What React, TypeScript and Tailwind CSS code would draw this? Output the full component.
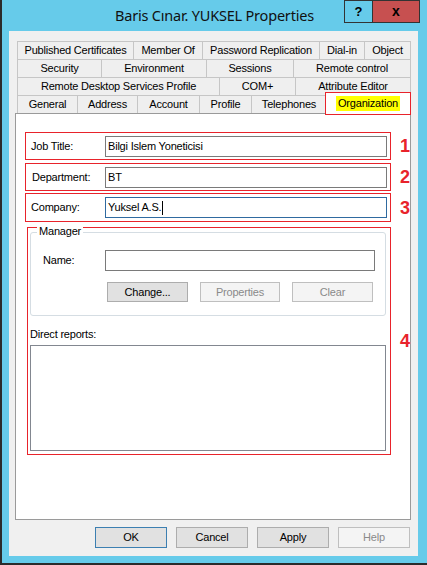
import React from "react";

function Tab({ label, w, last }: { label: string; w: string; last?: boolean }) {
  return (
    <div
      className={`${w} h-[18px] shrink-0 border-t border-l ${last ? "border-r" : ""} border-[#c6c6c6] bg-[#efefef] flex items-center justify-center text-[11px] tracking-[-0.2px] text-black whitespace-nowrap`}
    >
      {label}
    </div>
  );
}

function Num({ n }: { n: string }) {
  return (
    <div className="ml-[9px] text-[18px] leading-none font-bold text-[#e8232b] font-['Liberation_Sans',Arial,sans-serif]">
      {n}
    </div>
  );
}

export default function App() {
  return (
    <div className="w-[427px] h-[565px] bg-[#66cbea] border-l-2 border-b-2 border-[#2b2b2b] relative font-['Liberation_Sans',Arial,sans-serif] text-black overflow-hidden">
      {/* Title bar */}
      <div className="h-[31px] flex items-center justify-center relative">
        <div className="text-[14.5px] font-['Noto_Sans',sans-serif] tracking-[-0.2px] text-[#111] pt-[1px]">
          Baris Cınar. YUKSEL Properties
        </div>
        <div className="absolute top-0 right-[7px] flex">
          <div className="w-[29px] h-[23px] border border-[#333] flex items-center justify-center text-[13px] font-bold">
            ?
          </div>
          <div className="w-[47px] h-[23px] border border-l-0 border-[#333] bg-[#c75050] flex items-center justify-center text-[14px] font-bold">
            x
          </div>
        </div>
      </div>

      {/* Client area */}
      <div className="ml-[7px] w-[409px] h-[525px] bg-[#f0f0f0] pt-[10px] flex flex-col">
        {/* Tabs */}
        <div className="ml-[8px] w-[394px] flex flex-col">
          <div className="flex">
            <Tab label="Published Certificates" w="w-[116px]" />
            <Tab label="Member Of" w="w-[69px]" />
            <Tab label="Password Replication" w="w-[117px]" />
            <Tab label="Dial-in" w="w-[45px]" />
            <Tab label="Object" w="w-[47px]" last />
          </div>
          <div className="flex">
            <Tab label="Security" w="w-[84px]" />
            <Tab label="Environment" w="w-[105px]" />
            <Tab label="Sessions" w="w-[87px]" />
            <Tab label="Remote control" w="w-[118px]" last />
          </div>
          <div className="flex">
            <Tab label="Remote Desktop Services Profile" w="w-[202px]" />
            <Tab label="COM+" w="w-[76px]" />
            <Tab label="Attribute Editor" w="w-[116px]" last />
          </div>
          <div className="flex h-[18px] items-start">
            <Tab label="General" w="w-[60px]" />
            <Tab label="Address" w="w-[60px]" />
            <Tab label="Account" w="w-[62px]" />
            <Tab label="Profile" w="w-[52px]" />
            <Tab label="Telephones" w="w-[75px]" />
            <div className="relative z-10 -mt-[3px] w-[86px] h-[23px] -ml-[1px] border border-[#e8232b] bg-white flex items-center justify-center">
              <span className="bg-[#ffff00] px-[2px] py-[1px] text-[11px] tracking-[-0.2px] leading-[13px]">
                Organization
              </span>
            </div>
          </div>
        </div>

        {/* Panel */}
        <div className="ml-[6px] w-[396px] h-[407px] border border-[#9a9a9a] bg-white pt-[18px] pl-[9px] flex flex-col">
          <div className="flex items-center">
            <div className="w-[366px] h-[28px] border border-[#e8232b] flex items-center">
              <div className="w-[79px] pl-[5px] text-[11px] tracking-[-0.2px]">Job Title:</div>
              <div className="w-[282px] h-[21px] border border-[#7a7a7a] flex items-center pl-[2px] text-[11px] tracking-[-0.2px]">
                Bilgi Islem Yoneticisi
              </div>
            </div>
            <Num n="1" />
          </div>
          <div className="flex items-center mt-[3px]">
            <div className="w-[366px] h-[28px] border border-[#e8232b] flex items-center">
              <div className="w-[79px] pl-[6px] text-[11px] tracking-[-0.2px]">Department:</div>
              <div className="w-[282px] h-[21px] border border-[#7a7a7a] flex items-center pl-[2px] text-[11px] tracking-[-0.2px]">
                BT
              </div>
            </div>
            <Num n="2" />
          </div>
          <div className="flex items-center mt-[2px]">
            <div className="w-[366px] h-[29px] border border-[#e8232b] flex items-center">
              <div className="w-[79px] pl-[5px] text-[11px] tracking-[-0.2px]">Company:</div>
              <div className="w-[282px] h-[21px] border border-[#2f6aa0] flex items-center pl-[2px] text-[11px] tracking-[-0.2px]">
                Yuksel A.S.
                <span className="inline-block w-px h-[14px] bg-black ml-[1px]" />
              </div>
            </div>
            <Num n="3" />
          </div>

          {/* Manager annotated area */}
          <div className="flex items-center mt-[5px] ml-[2px]">
            <div className="w-[365px] h-[228px] border border-[#e8232b] pl-[2px] pt-[4px] flex flex-col">
              <div className="relative w-[356px] h-[84px] border border-[#d5dde3] rounded-[3px] pt-[17px] pl-[12px]">
                <span className="absolute -top-[8px] left-[6px] bg-white px-[2px] text-[11px] tracking-[-0.2px] leading-[13px]">
                  Manager
                </span>
                <div className="flex items-center">
                  <div className="w-[62px] text-[11px] tracking-[-0.2px]">Name:</div>
                  <div className="w-[270px] h-[21px] border border-[#7a7a7a]" />
                </div>
                <div className="flex mt-[11px] ml-[64px] gap-[12px]">
                  <div className="w-[81px] h-[20px] border border-[#adadad] bg-[#e1e1e1] flex items-center justify-center text-[11px] tracking-[-0.2px]">
                    Change...
                  </div>
                  <div className="w-[80px] h-[20px] border border-[#bfbfbf] bg-[#f4f4f4] flex items-center justify-center text-[11px] tracking-[-0.2px] text-[#8a8a8a]">
                    Properties
                  </div>
                  <div className="w-[81px] h-[20px] border border-[#bfbfbf] bg-[#f4f4f4] flex items-center justify-center text-[11px] tracking-[-0.2px] text-[#8a8a8a]">
                    Clear
                  </div>
                </div>
              </div>
              <div className="mt-[12px] text-[11px] tracking-[-0.2px] leading-[13px]">Direct reports:</div>
              <div className="mt-[4px] w-[356px] h-[106px] border border-[#828790]" />
            </div>
            <Num n="4" />
          </div>
        </div>

        {/* Dialog buttons */}
        <div className="flex mt-[7px] ml-[86px] gap-[9px]">
          <div className="w-[72px] h-[21px] border border-[#3c7fb1] bg-[#e1e1e1] flex items-center justify-center text-[11px] tracking-[-0.2px]">
            OK
          </div>
          <div className="w-[72px] h-[21px] border border-[#adadad] bg-[#e1e1e1] flex items-center justify-center text-[11px] tracking-[-0.2px]">
            Cancel
          </div>
          <div className="w-[72px] h-[21px] border border-[#adadad] bg-[#e1e1e1] flex items-center justify-center text-[11px] tracking-[-0.2px]">
            Apply
          </div>
          <div className="w-[72px] h-[21px] border border-[#bfbfbf] bg-[#f4f4f4] flex items-center justify-center text-[11px] tracking-[-0.2px] text-[#8a8a8a]">
            Help
          </div>
        </div>
      </div>
    </div>
  );
}
